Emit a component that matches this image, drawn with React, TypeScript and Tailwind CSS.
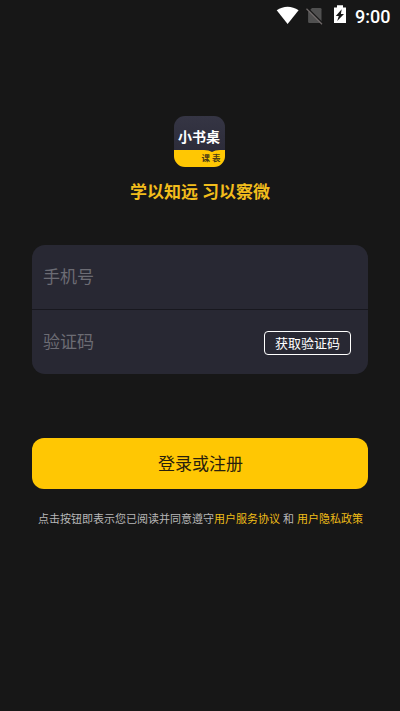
import React from 'react';

function StatusBar() {
  return (
    <header className="relative h-8 w-full text-white">
      <svg className="absolute left-[276px] top-[6px]" width="24" height="19" viewBox="0 0 24 19">
        <path d="M0.7 4.2C7.4-.5 15.8-.5 22.6 4.2L11.6 18Z" fill="#fff" />
      </svg>
      <svg className="absolute left-[305px] top-[6px]" width="19" height="20" viewBox="0 0 19 20">
        <path d="M7 2h8.2q1.3 0 1.3 1.3V17H4.3q-1.2 0-1.2-1.2V6Z" fill="#505050" />
        <path d="M2.8 2.2L18 17.4" stroke="#171717" strokeWidth="1.4" />
        <path d="M1.5 2.7L17 18.2" stroke="#706969" strokeWidth="1.3" />
      </svg>
      <svg className="absolute left-[333px] top-[5px]" width="14" height="19" viewBox="0 0 14 19">
        <path d="M4 0.3h6V2.4h3V18H1V2.4h3Z" fill="#fff" />
        <path d="M8.7 4.3L2.8 11h3L4.2 16L11 9H7.9Z" fill="#171717" />
      </svg>
      <span className="absolute left-[355px] top-[5px] font-['Roboto'] text-[18px] font-medium leading-6">9:00</span>
    </header>
  );
}

function Logo() {
  return (
    <svg width="51" height="51" viewBox="0 0 51 51" className="mr-px block" role="img">
      <defs>
        <clipPath id="tile"><rect width="51" height="51" rx="11" /></clipPath>
        <linearGradient id="night" x1="0" y1="0" x2="0" y2="1">
          <stop stopColor="#353544" />
          <stop offset="1" stopColor="#282835" />
        </linearGradient>
      </defs>
      <g clipPath="url(#tile)">
        <rect width="51" height="51" fill="url(#night)" />
        <path d="M0 34H30Q35 34 38 36Q41 34 46 34H51V51H0Z" fill="#ffc703" />
      </g>
      <text x="4" y="26" fontSize="14" fontWeight="700" fill="#fff" fontFamily="'Noto Sans CJK SC', sans-serif" textLength="42">小书桌</text>
      <text x="27.5" y="45" fontSize="8.5" fontWeight="700" fill="#4a3c16" fontFamily="'Noto Sans CJK SC', sans-serif" textLength="19">课表</text>
    </svg>
  );
}

export default function App() {
  return (
    <div className="flex h-[711px] w-[400px] flex-col items-center overflow-hidden bg-[#171717] font-['Noto_Sans_CJK_SC',sans-serif]">
      <StatusBar />
      <main className="flex w-full flex-col items-center px-8 pt-[84px]">
        <Logo />
        <h1 className="mt-[11px] whitespace-nowrap text-[17px] font-bold leading-[25px] text-[#f2bd1c]">学以知远 习以察微</h1>
        <section className="mt-[42px] w-full overflow-hidden rounded-[13px] bg-[#282833]">
          <div className="flex h-16 items-center pb-[2px] pl-[11px] text-[17px] text-[#6c6c74]">手机号</div>
          <div className="flex h-[65px] items-center justify-between border-t border-[#18181f] pl-[11px] pr-[17px]">
            <span className="pb-[2px] text-[17px] text-[#6c6c74]">验证码</span>
            <button className="mt-[2px] flex h-6 w-[87px] items-center justify-center rounded-[4px] border border-white text-[13px] leading-5 text-white">获取验证码</button>
          </div>
        </section>
        <button className="mt-16 flex h-[51px] w-full items-center justify-center rounded-[12px] bg-[#ffc703] pb-[2px] pl-px text-[17px] text-[#29200d]">登录或注册</button>
        <p className="mt-[21px] whitespace-nowrap pl-px text-[11px] leading-4 text-[#b8b8b8] [word-spacing:0.5px]">
          点击按钮即表示您已阅读并同意遵守<span className="text-[#efbd18]">用户服务协议</span> 和 <span className="text-[#efbd18]">用户隐私政策</span>
        </p>
      </main>
    </div>
  );
}
